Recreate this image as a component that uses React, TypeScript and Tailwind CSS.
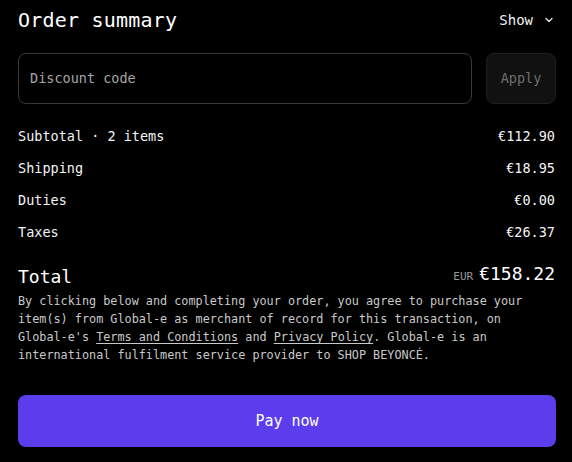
import React from 'react';

const rows = [
    { label: 'Subtotal · 2 items', value: '€112.90' },
    { label: 'Shipping', value: '€18.95' },
    { label: 'Duties', value: '€0.00' },
    { label: 'Taxes', value: '€26.37' },
];

const Chevron = () => (
    <svg width="10" height="10" viewBox="0 0 10 10" fill="none" className="ml-[11px]">
        <path d="M2 3.5 L5 6.5 L8 3.5" stroke="#e5e5e5" strokeWidth="1.4" strokeLinecap="round" strokeLinejoin="round" />
    </svg>
);

export default function App() {
    return (
        <div className="w-[572px] h-[462px] bg-black text-white pl-[18px] pr-[16px] font-['DejaVu_Sans_Mono','Liberation_Mono',monospace] overflow-hidden">
            {/* header */}
            <div className="flex items-center justify-between h-[40px]">
                <h1 className="text-[20px] leading-none font-normal tracking-[0.2px]">Order summary</h1>
                <button className="flex items-center text-[14px] text-[#f2f2f2] pr-[2px]">
                    Show
                    <Chevron />
                </button>
            </div>

            {/* discount code */}
            <div className="flex gap-[14px] mt-[13px] h-[51px]">
                <div className="flex-1 flex items-center rounded-[8px] border border-[#3a3a3a] px-[11px]">
                    <span className="text-[13.5px] text-[#a6a6a6]">Discount code</span>
                </div>
                <button className="w-[70px] rounded-[8px] border border-[#1f1f1f] bg-[#111111] text-[13.5px] text-[#6e6e6e]">
                    Apply
                </button>
            </div>

            {/* line items */}
            <div className="mt-[16px] flex flex-col">
                {rows.map((r) => (
                    <div key={r.label} className="flex items-center justify-between h-[32px] text-[13.5px] text-[#f4f4f4] pr-[1px]">
                        <span>{r.label}</span>
                        <span>{r.value}</span>
                    </div>
                ))}
            </div>

            {/* total */}
            <div className="mt-[17px] flex items-end justify-between h-[24px] pr-[1px]">
                <span className="text-[18px] leading-[24px]">Total</span>
                <span className="flex items-baseline leading-[24px]">
                    <span className="text-[11px] text-[#9a9a9a] mr-[6px]">EUR</span>
                    <span className="text-[18px]">€158.22</span>
                </span>
            </div>

            <p className="mt-[3px] text-[11.8px] leading-[18px] text-[#c9c9c9]">
                By clicking below and completing your order, you agree to purchase your
                <br />
                item(s) from Global-e as merchant of record for this transaction, on
                <br />
                Global-e's <span className="underline underline-offset-2">Terms and Conditions</span> and{' '}
                <span className="underline underline-offset-2">Privacy Policy</span>. Global-e is an
                <br />
                international fulfilment service provider to SHOP BEYONCÉ.
            </p>

            <button className="mt-[31px] w-full h-[52px] rounded-[8px] bg-[#5b3ded] text-[15px] text-white">
                Pay now
            </button>
        </div>
    );
}
